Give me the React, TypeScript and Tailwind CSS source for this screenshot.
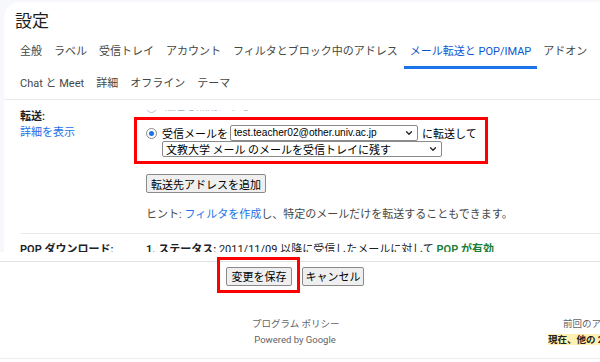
import { ChevronDown } from 'lucide-react';

const tabsTop = ['全般', 'ラベル', '受信トレイ', 'アカウント', 'フィルタとブロック中のアドレス', 'メール転送と POP/IMAP', 'アドオン'];
const tabsBottom = ['Chat と Meet', '詳細', 'オフライン', 'テーマ'];
const ACTIVE = 'メール転送と POP/IMAP';

function Radio({ checked, faded }: { checked?: boolean; faded?: boolean }) {
  return (
    <span
      className={`flex h-[11px] w-[11px] shrink-0 items-center justify-center rounded-full border bg-white ${
        faded ? 'border-[#b8c4d6]' : 'border-[#8a8a8a]'
      }`}
    >
      {checked && <span className="h-[5px] w-[5px] rounded-full bg-[#1a73e8]" />}
    </span>
  );
}

function FakeSelect({ label, width, latin }: { label: string; width: string; latin?: boolean }) {
  return (
    <div
      className={`flex h-[16px] ${width} items-center justify-between rounded-[2px] border border-[#8a8a8a] bg-white pl-[3px] pr-[3px] text-black ${
        latin
          ? "font-['Liberation_Sans','Noto_Sans_CJK_JP',sans-serif] text-[10.2px]"
          : "font-['Noto_Sans_CJK_JP',sans-serif] text-[11px]"
      }`}
    >
      <span className="truncate">{label}</span>
      <ChevronDown size={10} strokeWidth={3} className="shrink-0 text-[#222]" />
    </div>
  );
}

function GrayButton({ children, className = '' }: { children: React.ReactNode; className?: string }) {
  return (
    <div
      className={`flex h-[19px] items-center justify-center rounded-[2px] border border-[#8a8a8a] bg-[#efefef] font-['Noto_Sans_CJK_JP',sans-serif] text-[11px] text-black ${className}`}
    >
      {children}
    </div>
  );
}

export default function App() {
  return (
    <div className="h-[362px] w-[600px] overflow-hidden bg-[#f6f8fc] font-[Roboto,'Noto_Sans_CJK_JP',sans-serif] text-[#1f1f1f]">
      {/* Settings card */}
      <div className="ml-[4px] mt-[2px] h-[250px] overflow-hidden rounded-tl-[16px] bg-white">
        <div className="h-[34px] pl-[11px] pt-[7px] text-[17px] leading-[24px]">設定</div>

        {/* Tabs */}
        <nav className="border-b border-[#e8eaed] pl-[10px] text-[11px] text-[#444746]">
          <div className="flex h-[33px]">
            {tabsTop.map((t) => (
              <div
                key={t}
                className={`flex items-center whitespace-nowrap border-b-[3px] px-[6px] pt-[3px] ${
                  t === ACTIVE ? 'border-[#1a73e8] text-[#0b57d0]' : 'border-transparent'
                }`}
              >
                {t}
              </div>
            ))}
          </div>
          <div className="flex h-[30px]">
            {tabsBottom.map((t) => (
              <div key={t} className="flex items-center whitespace-nowrap px-[6px]">
                {t}
              </div>
            ))}
          </div>
        </nav>

        {/* Scrolled content */}
        <div className="mt-[10px] h-[142px] overflow-hidden">
          <div className="-mt-[10px] text-[11px] leading-[16px]">
            <div className="ml-[16px] flex border-b border-[#e8eaed] pb-[10px]">
              <div className="w-[126px] shrink-0 pt-[9px]">
                <div className="font-semibold text-[#202124]">転送:</div>
                <div className="text-[#1a73e8]">詳細を表示</div>
              </div>
              <div className="flex flex-col items-start">
                <div className="flex h-[14px] items-center gap-[6px] text-[#a9b4c6]">
                  <Radio faded />
                  <span>転送を無効にする</span>
                </div>

                <div className="-ml-[12px] mt-[3px] w-[354px] border-[3px] border-[#ff0000] pb-[4px] pl-[9px] pt-[5px] font-['Noto_Sans_CJK_JP',sans-serif] text-black">
                  <div className="flex h-[16px] items-center">
                    <Radio checked />
                    <span className="ml-[5px]">受信メールを</span>
                    <div className="ml-[2px]">
                      <FakeSelect latin label="test.teacher02@other.univ.ac.jp" width="w-[188px]" />
                    </div>
                    <span className="ml-[4px]">に転送して</span>
                  </div>
                  <div className="ml-[16px]">
                    <FakeSelect label="文教大学 メール のメールを受信トレイに残す" width="w-[280px]" />
                  </div>
                </div>

                <GrayButton className="mt-[10px] w-[120px]">転送先アドレスを追加</GrayButton>

                <div className="mt-[14px] whitespace-nowrap text-[#444746]">
                  ヒント: <span className="text-[#1a73e8]">フィルタを作成</span>
                  し、特定のメールだけを転送することもできます。
                </div>
              </div>
            </div>

            <div className="ml-[16px] flex pt-[8px] whitespace-nowrap">
              <div className="w-[126px] shrink-0 font-semibold text-[#202124]">POP ダウンロード:</div>
              <div className="text-[#202124]">
                <span className="font-semibold">1. ステータス: </span>
                2011/11/09 以降に受信したメールに対して{' '}
                <span className="font-semibold text-[#188038]">POP が有効</span>
              </div>
            </div>
          </div>
        </div>
      </div>

      {/* Save bar */}
      <div className="h-[9px] bg-white" />
      <div className="border-t border-[#e3e3e3] bg-white">
        <div className="flex pl-[226px] pt-[5px]">
          <div className="relative">
            <GrayButton className="w-[66px]">変更を保存</GrayButton>
            <div className="absolute -bottom-[7px] -left-[9px] -right-[8px] -top-[10px] border-[3px] border-[#ff0000]" />
          </div>
          <GrayButton className="ml-[10px] w-[62px]">キャンセル</GrayButton>
        </div>

        {/* Footer */}
        <div className="mt-[30px] flex text-[9.5px] leading-[16px] text-[#5f6368]">
          <div className="ml-[252px] w-[86px] shrink-0 text-center">
            <div className="whitespace-nowrap">プログラム ポリシー</div>
            <div className="whitespace-nowrap">Powered by Google</div>
          </div>
          <div className="ml-[210px] shrink-0 whitespace-nowrap">
            <div className="pl-[15px]">前回のアカウント アクティビティ: 0 分前</div>
            <div>
              <span className="bg-[#fdf0b0] font-semibold text-[#202124]">現在、他の 2 か所で開いています</span>
            </div>
          </div>
        </div>
        <div className="mt-[10px] h-[20px] border-t border-[#ececec]" />
      </div>
    </div>
  );
}
